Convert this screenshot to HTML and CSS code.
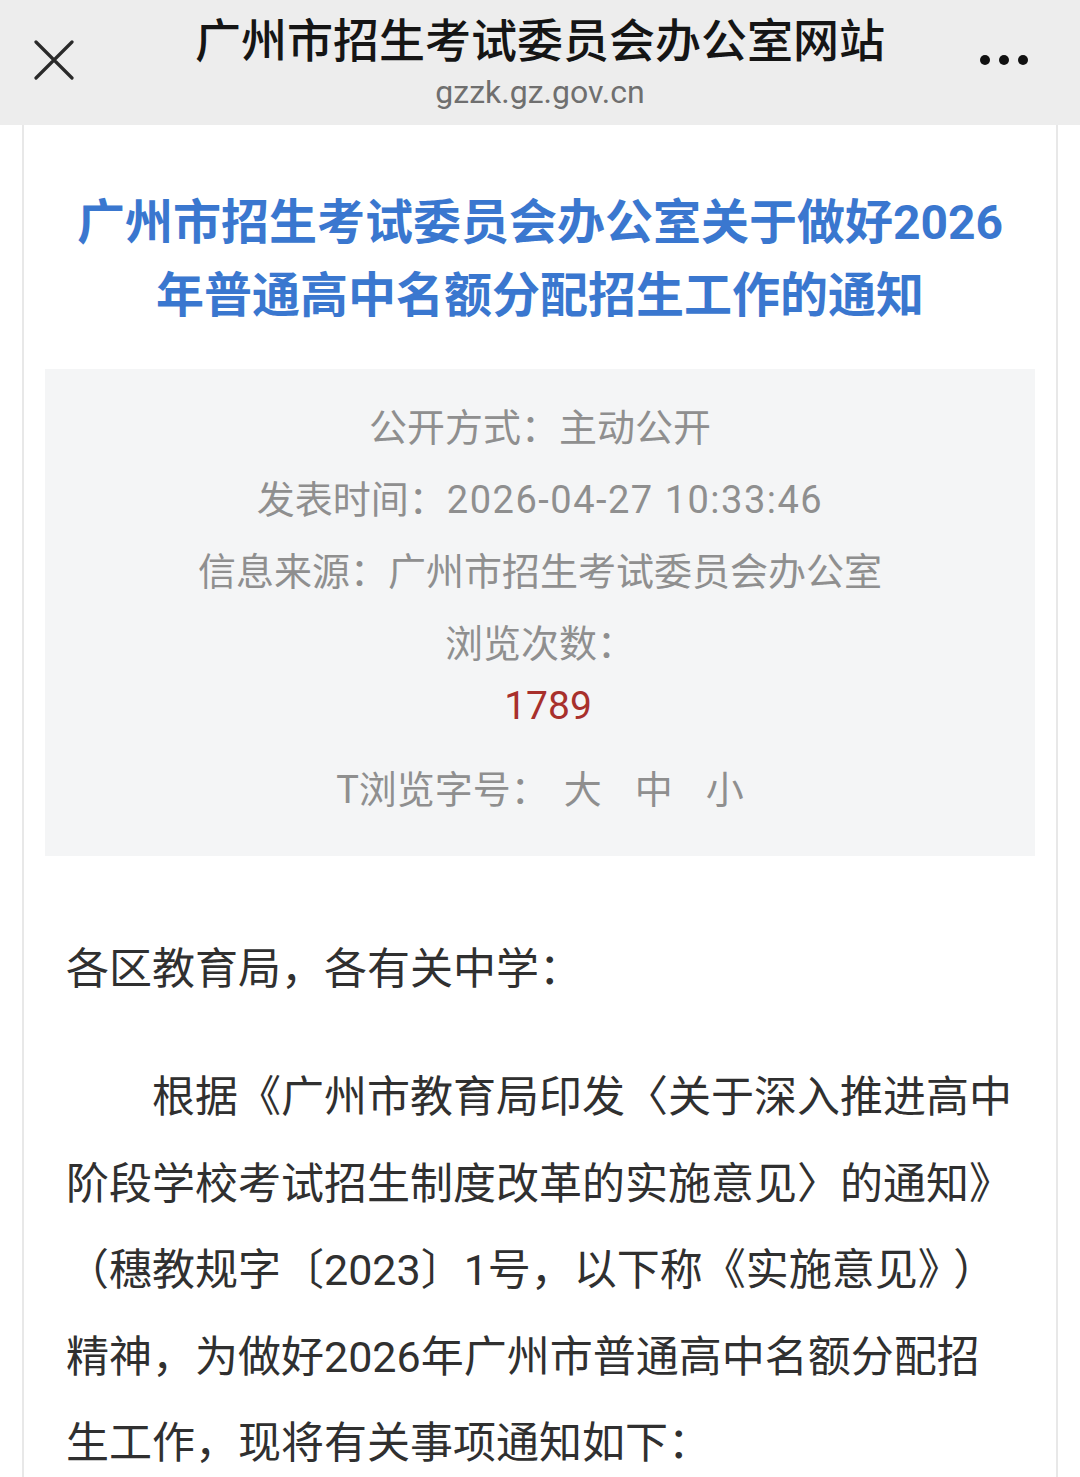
FILE: index.html
```html
<!DOCTYPE html>
<html lang="zh-CN">
<head>
<meta charset="utf-8">
<title>广州市招生考试委员会办公室网站</title>
<link rel="stylesheet" href="styles.css">
</head>
<body>
<header class="topbar">
  <div class="bar-left">
    <svg class="icon-close" width="40" height="40" viewBox="0 0 40 40">
      <path d="M2 2 L38 38 M38 2 L2 38" stroke="#2a2a2a" stroke-width="3.2" stroke-linecap="round" fill="none"/>
    </svg>
  </div>
  <div class="bar-center">
    <div class="site-title">广州市招生考试委员会办公室网站</div>
    <div class="site-url">gzzk.gz.gov.cn</div>
  </div>
  <div class="bar-right">
    <svg class="icon-more" width="52" height="14" viewBox="0 0 52 14">
      <circle cx="7" cy="7" r="5" fill="#111"/>
      <circle cx="26" cy="7" r="5" fill="#111"/>
      <circle cx="45" cy="7" r="5" fill="#111"/>
    </svg>
  </div>
</header>
<main class="page">
  <h1 class="article-title">广州市招生考试委员会办公室关于做好2026<br>年普通高中名额分配招生工作的通知</h1>
  <section class="info">
    <div class="info-row">公开方式：主动公开</div>
    <div class="info-row">发表时间：<span class="num">2026-04-27 10:33:46</span></div>
    <div class="info-row">信息来源：广州市招生考试委员会办公室</div>
    <div class="info-row">浏览次数：</div>
    <div class="info-count">1789</div>
    <div class="info-row font-size">T浏览字号：<span class="fs">大</span><span class="fs">中</span><span class="fs">小</span></div>
  </section>
  <article class="content">
    <p class="greet">各区教育局，各有关中学：</p>
    <p class="para">根据《广州市教育局印发〈关于深入推进高中<br>阶段学校考试招生制度改革的实施意见〉的通知》<br>（穗教规字〔2023〕1号，以下称《实施意见》<span class="close-paren">）</span><br>精神，为做好2026年广州市普通高中名额分配招<br>生工作，现将有关事项通知如下：</p>
  </article>
</main>
</body>
</html>
```
FILE: styles.css
```css
html, body {
  margin: 0;
  padding: 0;
  background: #ffffff;
}
body {
  width: 1080px;
  height: 1477px;
  overflow: hidden;
  font-family: "Roboto", "Noto Sans CJK SC", "Noto Sans", sans-serif;
}
.topbar {
  height: 125px;
  background: #ededed;
  display: grid;
  grid-template-columns: 1fr auto 1fr;
  align-items: start;
}
.bar-left {
  padding: 40px 0 0 34px;
}
.icon-close {
  display: block;
}
.bar-center {
  text-align: center;
  padding-top: 8px;
}
.site-title {
  font-family: "Noto Sans CJK SC", sans-serif;
  font-size: 46px;
  line-height: 58px;
  color: #151515;
  font-weight: 500;
}
.site-url {
  font-size: 32px;
  line-height: 42px;
  color: #6f6f6f;
  font-family: "Roboto", "Noto Sans", sans-serif;
  margin-top: 5px;
}
.bar-right {
  display: flex;
  justify-content: flex-end;
  padding: 53px 50px 0 0;
}
.icon-more {
  display: block;
}
.page {
  margin: 0 22px;
  border-left: 2px solid #e8e8e8;
  border-right: 2px solid #e8e8e8;
  min-height: 1352px;
  padding-top: 61px;
}
.article-title {
  margin: 0;
  text-align: center;
  font-size: 48px;
  line-height: 73px;
  font-weight: 700;
  color: #3a77cf;
}
.info {
  margin: 37px 21px 0;
  background: #f4f5f6;
  padding: 23px 0 30px;
  text-align: center;
  color: #8f8f8f;
  font-size: 38px;
}
.info-row {
  line-height: 72px;
}
.num {
  letter-spacing: 1.5px;
}
.info-count {
  line-height: 52px;
  color: #a8302c;
  font-size: 39px;
  padding-left: 16px;
}
.font-size {
  margin-top: 22px;
}
.fs {
  margin-left: 33px;
}
.fs:first-child {
  margin-left: 15px;
}
.content {
  padding: 70px 0 0 42px;
  color: #303030;
  font-size: 43px;
}
.greet {
  margin: 0;
  line-height: 86px;
}
.para {
  margin: 42px 0 0;
  line-height: 86.5px;
  text-indent: 86px;
  white-space: nowrap;
}
.close-paren {
  margin-left: 14px;
}
```
